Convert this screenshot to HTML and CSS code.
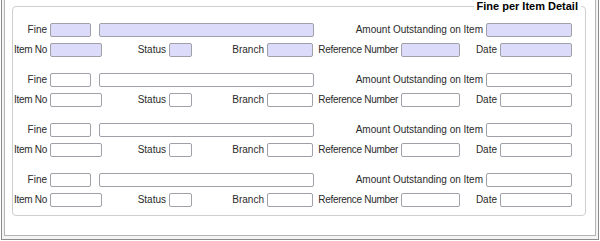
FILE: index.html
```html
<!DOCTYPE html>
<html>
<head>
<meta charset="utf-8">
<link rel="stylesheet" href="styles.css">
</head>
<body>
<div class="frame">
  <div class="frame-inner">
    <fieldset class="group">
      <legend class="legend">Fine per Item Detail</legend>
      <div class="rows">
        <div class="item filled">
          <div class="row">
            <label class="lbl w50">Fine</label><input class="inp w41"><input class="inp w215 sp8"><label class="lbl w172">Amount Outstanding on Item</label><input class="inp w86">
          </div>
          <div class="row">
            <label class="lbl w50 tight">Item No</label><input class="inp w52"><label class="lbl w67">Status</label><input class="inp w23"><label class="lbl w75">Branch</label><input class="inp w46"><label class="lbl w88 tight">Reference Number</label><input class="inp w59"><label class="lbl w40">Date</label><input class="inp w72">
          </div>
        </div>
        <div class="item">
          <div class="row">
            <label class="lbl w50">Fine</label><input class="inp w41"><input class="inp w215 sp8"><label class="lbl w172">Amount Outstanding on Item</label><input class="inp w86">
          </div>
          <div class="row">
            <label class="lbl w50 tight">Item No</label><input class="inp w52"><label class="lbl w67">Status</label><input class="inp w23"><label class="lbl w75">Branch</label><input class="inp w46"><label class="lbl w88 tight">Reference Number</label><input class="inp w59"><label class="lbl w40">Date</label><input class="inp w72">
          </div>
        </div>
        <div class="item">
          <div class="row">
            <label class="lbl w50">Fine</label><input class="inp w41"><input class="inp w215 sp8"><label class="lbl w172">Amount Outstanding on Item</label><input class="inp w86">
          </div>
          <div class="row">
            <label class="lbl w50 tight">Item No</label><input class="inp w52"><label class="lbl w67">Status</label><input class="inp w23"><label class="lbl w75">Branch</label><input class="inp w46"><label class="lbl w88 tight">Reference Number</label><input class="inp w59"><label class="lbl w40">Date</label><input class="inp w72">
          </div>
        </div>
        <div class="item">
          <div class="row">
            <label class="lbl w50">Fine</label><input class="inp w41"><input class="inp w215 sp8"><label class="lbl w172">Amount Outstanding on Item</label><input class="inp w86">
          </div>
          <div class="row">
            <label class="lbl w50 tight">Item No</label><input class="inp w52"><label class="lbl w67">Status</label><input class="inp w23"><label class="lbl w75">Branch</label><input class="inp w46"><label class="lbl w88 tight">Reference Number</label><input class="inp w59"><label class="lbl w40">Date</label><input class="inp w72">
          </div>
        </div>
      </div>
    </fieldset>
  </div>
</div>
</body>
</html>
```

FILE: styles.css
```css
html, body {
  margin: 0;
  padding: 0;
  background: #ffffff;
  overflow: hidden;
}
body {
  font-family: "Liberation Sans", Arial, sans-serif;
  font-size: 10px;
  color: #2a2a2a;
}
.frame {
  margin: 0 1px 0 1px;
  width: 596px;
  height: 239px;
  border-left: 1px solid #8c8c8c;
  border-right: 1px solid #8c8c8c;
  border-bottom: 1px solid #8c8c8c;
  background: #f4f4f4;
}
.frame-inner {
  margin: 0 2px 0 2px;
  height: 236px;
  box-sizing: border-box;
  border-left: 1px solid #b4b4b4;
  border-right: 1px solid #b4b4b4;
  border-bottom: 1px solid #b4b4b4;
  background: #ffffff;
  padding: 0 9px 0 7px;
}
.group {
  margin: 0;
  padding: 0 0 8px 0;
  border: 1px solid #cfcfcf;
  border-radius: 4px;
  min-width: 0;
}
.legend {
  margin-left: auto;
  margin-right: 4px;
  padding: 0 3px;
  font-size: 11px;
  font-weight: bold;
  line-height: 13px;
  color: #000;
}
.rows {
  margin-left: -13px;
  padding-top: 10px;
  display: flex;
  flex-direction: column;
  gap: 16px;
}
.item {
  display: flex;
  flex-direction: column;
  gap: 6px;
}
.row {
  display: flex;
  align-items: center;
  height: 14px;
}
.lbl {
  box-sizing: border-box;
  padding-right: 3px;
  text-align: right;
  line-height: 14px;
  white-space: nowrap;
  flex: none;
}
.tight { letter-spacing: -0.3px; }
.inp {
  box-sizing: border-box;
  height: 14px;
  margin: 0;
  padding: 0;
  border: 1px solid #a0a0a8;
  border-radius: 2px;
  background: #ffffff;
  flex: none;
  font-size: 10px;
}
.filled .inp { background: #dcdcfa; }
.sp8 { margin-left: 8px; }
.w23 { width: 23px; }
.w40 { width: 40px; }
.w41 { width: 41px; }
.w46 { width: 46px; }
.w50 { width: 50px; }
.w52 { width: 52px; }
.w59 { width: 59px; }
.w67 { width: 67px; }
.w72 { width: 72px; }
.w75 { width: 75px; }
.w86 { width: 86px; }
.w88 { width: 88px; }
.w172 { width: 172px; }
.w215 { width: 215px; }
```
